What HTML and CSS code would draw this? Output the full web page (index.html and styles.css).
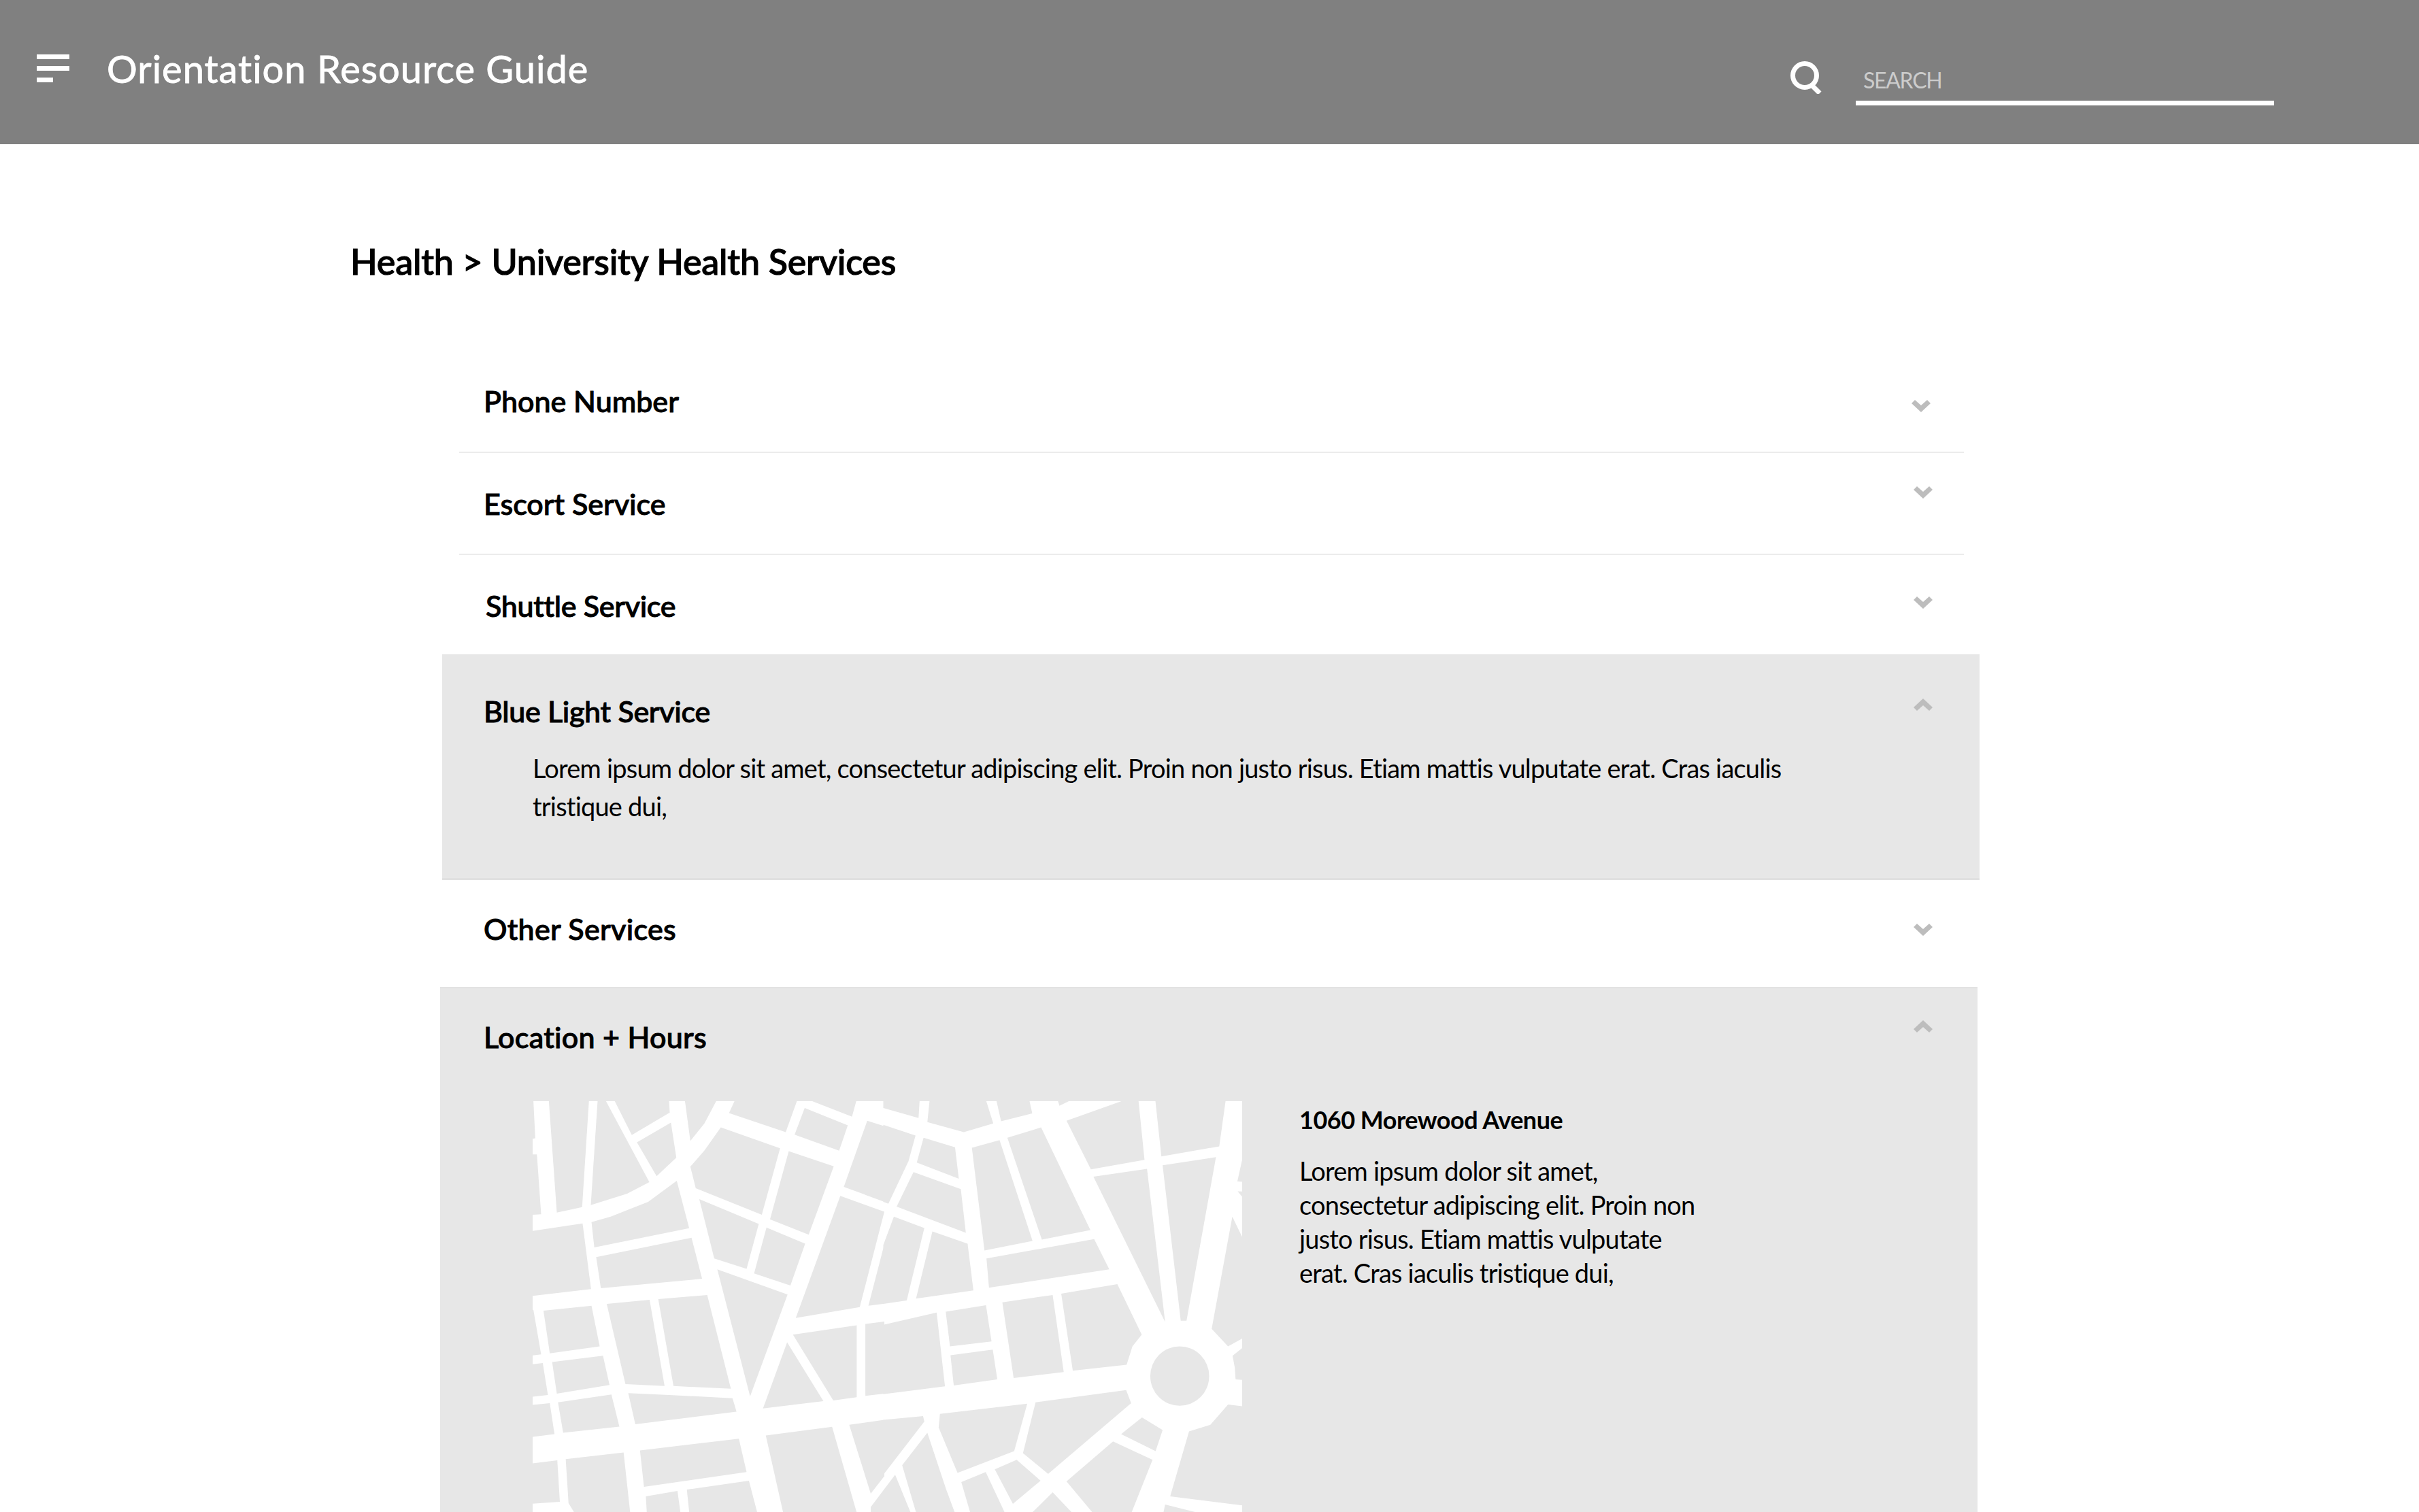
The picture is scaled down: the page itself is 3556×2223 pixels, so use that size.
FILE: index.html
```html
<!DOCTYPE html>
<html lang="en">
<head>
    <meta charset="UTF-8">
    <meta name="viewport" content="width=device-width, initial-scale=1.0">
    <title>Orientation Resource Guide</title>
    <link rel="stylesheet" href="styles.css">
</head>
<body>
    <header class="topbar">
        <div class="menu-icon"><span></span><span></span><span class="short"></span></div>
        <h1 class="site-title">Orientation Resource Guide</h1>
        <div class="search">
            <svg class="search-icon" viewBox="0 0 48 48"><circle cx="21" cy="21" r="17.5"/><line x1="32" y1="36" x2="43" y2="47"/></svg>
            <input class="search-input" type="text" placeholder="SEARCH">
        </div>
    </header>

    <main class="page">
        <h2 class="crumb">Health &gt; University Health Services</h2>

        <div class="accordion">
            <section class="row row-phone">
                <h3>Phone Number</h3>
                <svg class="chev chev-phone" viewBox="0 0 28 20"><polygon points="0,6 5,1 14,9 23,1 28,6 14,19"/></svg>
            </section>
            <section class="row row-escort">
                <h3>Escort Service</h3>
                <svg class="chev chev-escort" viewBox="0 0 28 20"><polygon points="0,6 5,1 14,9 23,1 28,6 14,19"/></svg>
            </section>
            <section class="row row-shuttle">
                <h3>Shuttle Service</h3>
                <svg class="chev chev-shuttle" viewBox="0 0 28 20"><polygon points="0,6 5,1 14,9 23,1 28,6 14,19"/></svg>
            </section>

            <section class="row open open-blue">
                <h3>Blue Light Service</h3>
                <svg class="chev chev-blue" viewBox="0 0 28 20"><polygon points="0,14 5,19 14,11 23,19 28,14 14,1"/></svg>
                <p class="row-text">Lorem ipsum dolor sit amet, consectetur adipiscing elit. Proin non justo risus. Etiam mattis vulputate erat. Cras iaculis<br>tristique dui,</p>
            </section>

            <section class="row row-other">
                <h3>Other Services</h3>
                <svg class="chev chev-other" viewBox="0 0 28 20"><polygon points="0,6 5,1 14,9 23,1 28,6 14,19"/></svg>
            </section>

            <section class="row open open-location">
                <h3>Location + Hours</h3>
                <svg class="chev chev-location" viewBox="0 0 28 20"><polygon points="0,14 5,19 14,11 23,19 28,14 14,1"/></svg>
                <div class="location">
                    <svg class="map" viewBox="783 1617 1043 606">
                        <rect class="road" x="783" y="1617" width="1043" height="606"/>
                        <g class="blocks" transform="translate(760 1600) scale(0.34439 0.39732)">
                            <polygon points="50,30 70,42 78,180 66,182 66,240 85,240 103,461 66,463 50,463"/>
                            <polygon points="135,30 308,30 278,435 170,455"/>
                            <polygon points="345,30 372,30 565,342 470,385 315,427"/>
                            <polygon points="410,30 648,30 652,85 490,168"/>
                            <polygon points="512,195 657,122 680,252 596,320"/>
                            <polygon points="715,30 858,30 800,125 740,190"/>
                            <polygon points="935,30 1200,30 1147,157 905,87"/>
                            <polygon points="1258,30 1452,30 1430,100 1258,42"/>
                            <polygon points="1228,68 1412,132 1375,226 1185,167"/>
                            <polygon points="870,140 1123,217 1045,463 763,365 740,285 800,225"/>
                            <polygon points="1160,228 1352,284 1245,537 1080,480"/>
                            <polygon points="1495,115 1568,135 1568,415 1395,360"/>
                            <polygon points="778,405 1032,497 980,663 842,625"/>
                            <polygon points="1065,510 1230,570 1167,725 1012,680"/>
                            <polygon points="1380,393 1568,452 1463,805 1190,845"/>
                            <polygon points="1568,572 1500,800 1568,792"/>
                            <polygon points="318,490 400,470 560,415 682,337 735,513 330,584"/>
                            <polygon points="338,620 745,548 790,700 358,735"/>
                            <polygon points="50,525 280,495 316,738 50,765"/>
                            <polygon points="113,818 318,800 353,950 140,976"/>
                            <polygon points="383,793 566,778 630,1097 463,1090"/>
                            <polygon points="603,775 812,760 913,1107 668,1097"/>
                            <polygon points="855,665 1155,758 995,1135"/>
                            <polygon points="150,1008 367,985 395,1093 170,1125"/>
                            <polygon points="175,1157 403,1128 437,1247 197,1270"/>
                            <polygon points="475,1123 650,1130 920,1142 937,1192 505,1238"/>
                            <polygon points="50,815 70,815 103,980 50,985"/>
                            <polygon points="50,1018 110,1012 132,1130 50,1138"/>
                            <polygon points="50,1168 140,1160 160,1275 50,1287"/>
                            <polygon points="50,1385 172,1372 183,1525 50,1533"/>
                            <polygon points="208,1367 455,1343 485,1580 255,1580 220,1530"/>
                            <polygon points="525,1335 947,1292 980,1415 542,1470"/>
                            <polygon points="550,1505 685,1485 700,1580 555,1580"/>
                            <polygon points="725,1480 990,1447 1030,1580 737,1580"/>
                            <polygon points="1062,1280 1345,1248 1455,1580 1140,1580"/>
                            <polygon points="1050,1180 1153,935 1308,1153"/>
                            <polygon points="1178,907 1450,872 1450,1138 1350,1150"/>
                            <polygon points="1487,867 1568,858 1568,1125 1487,1133"/>
                            <polygon points="1418,1240 1568,1222 1568,1430 1510,1495"/>
                        </g>
                        <g class="blocks" transform="translate(1280 1600) scale(0.3699 0.39732)">
                            <polygon points="50,30 195,30 190,105 50,68"/>
                            <polygon points="235,30 455,30 487,125 370,157 225,120"/>
                            <polygon points="497,30 628,30 642,88 518,117"/>
                            <polygon points="740,30 815,30 750,60"/>
                            <polygon points="1035,30 1063,30 1088,260 875,295 778,115"/>
                            <polygon points="1130,30 1412,30 1385,210 1155,247"/>
                            <polygon points="50,130 178,170 150,265 70,422 50,415"/>
                            <polygon points="210,178 335,213 350,330 183,270"/>
                            <polygon points="170,305 358,368 378,530 103,433"/>
                            <polygon points="402,215 512,187 643,560 452,595"/>
                            <polygon points="543,178 677,140 873,520 680,555"/>
                            <polygon points="885,322 1098,293 1170,860"/>
                            <polygon points="1160,280 1372,250 1255,855 1232,855"/>
                            <polygon points="50,575 92,470 213,512 143,780 50,793"/>
                            <polygon points="245,525 385,570 408,743 180,773"/>
                            <polygon points="460,625 888,553 948,665 470,733"/>
                            <polygon points="50,870 262,825 295,1098 50,1127"/>
                            <polygon points="298,822 458,798 480,932 315,950"/>
                            <polygon points="317,983 485,962 503,1072 330,1095"/>
                            <polygon points="523,787 723,760 767,1045 568,1067"/>
                            <polygon points="757,755 980,720 1077,907 1040,950 1017,1018 803,1040"/>
                            <ellipse cx="1228" cy="1060" rx="117" ry="110"/>
                            <polygon points="1490,255 1476,260 1457,340 1490,342"/>
                            <polygon points="1490,378 1458,376 1490,412"/>
                            <polygon points="1437,470 1476,545 1490,545 1490,920 1478,920 1420,950 1355,885"/>
                            <polygon points="1438,985 1478,955 1490,955 1490,1075 1450,1072 1447,1030"/>
                            <polygon points="1420,1165 1478,1172 1490,1172 1490,1540 1190,1505 1265,1265 1350,1240"/>
                            <polygon points="1170,1535 1310,1568 1160,1580"/>
                            <polygon points="1015,1112 1035,1160 705,1422 605,1345 655,1157"/>
                            <polygon points="275,1200 622,1162 570,1338 345,1418 270,1250"/>
                            <polygon points="50,1222 208,1208 213,1228 50,1425"/>
                            <polygon points="225,1270 300,1480 340,1580 185,1580 125,1390"/>
                            <polygon points="97,1425 165,1580 0,1580 0,1545"/>
                            <polygon points="360,1452 457,1415 540,1580 400,1580"/>
                            <polygon points="493,1405 580,1370 675,1447 565,1533"/>
                            <polygon points="625,1580 723,1490 815,1580"/>
                            <polygon points="995,1275 1078,1213 1160,1260 1132,1338"/>
                            <polygon points="778,1450 963,1302 1120,1370 1030,1580 895,1580"/>
                        </g>
                    </svg>
                    <div class="address">
                        <h4>1060 Morewood Avenue</h4>
                        <p>Lorem ipsum dolor sit amet,<br>consectetur adipiscing elit. Proin non<br>justo risus. Etiam mattis vulputate<br>erat. Cras iaculis tristique dui,</p>
                    </div>
                </div>
            </section>
        </div>
    </main>
</body>
</html>
```

FILE: styles.css
```css
*{
    padding: 0;
    margin: 0;
    box-sizing: border-box;
}
html, body{
    height: 100%;
    overflow: hidden;
}
body{
    font-family: 'Lato', 'Liberation Sans', sans-serif;
    font-variant-ligatures: none;
    background: white;
    color: black;
}

/* top bar */
.topbar{
    height: 212px;
    background: #808080;
    display: flex;
    align-items: flex-start;
    padding: 0 213px 0 54px;
}
.menu-icon{
    width: 48px;
    margin-top: 80px;
    display: flex;
    flex-direction: column;
    gap: 10px;
}
.menu-icon span{
    display: block;
    height: 7px;
    background: white;
}
.menu-icon .short{
    width: 24px;
}
.site-title{
    margin: 66px 0 0 55px;
    font-size: 56px;
    line-height: 70px;
    font-weight: 400;
    letter-spacing: 1px;
    color: white;
    -webkit-text-stroke: 0.8px white;
}
.search{
    margin-left: auto;
    display: flex;
    align-items: flex-start;
}
.search-icon{
    width: 48px;
    height: 48px;
    margin-top: 90px;
    fill: none;
    stroke: white;
    stroke-width: 7;
}
.search-input{
    width: 615px;
    height: 57px;
    margin: 98px 0 0 48px;
    padding: 0 0 12px 11px;
    border: 0;
    border-bottom: 7px solid white;
    background: transparent;
    font-family: inherit;
    font-size: 32px;
    letter-spacing: -1.3px;
    color: #ccc;
}
.search-input::placeholder{
    color: #ccc;
    opacity: 1;
}

/* main column */
.page{
    padding: 0 0 0 515px;
}
.crumb{
    font-size: 52px;
    line-height: 64px;
    font-weight: 500;
    letter-spacing: -0.2px;
    padding-top: 140px;
    height: 308px;
    -webkit-text-stroke: 1.2px black;
}
.accordion{
    width: 2212px;
    margin-left: 160px;
}

.row{
    position: relative;
    padding-left: 36px;
    border-bottom: 2px solid #ececec;
}
.row h3{
    font-size: 43px;
    line-height: 60px;
    font-weight: 500;
    -webkit-text-stroke: 1px black;
}
.row-phone{
    padding-top: 40px;
    height: 146px;
}
.row-escort{
    padding-top: 45px;
    height: 150px;
}
.row-shuttle{
    padding-top: 45px;
    height: 146px;
    border-bottom: 0;
}
.row-shuttle h3{
    margin-left: 3px;
    letter-spacing: -0.3px;
}
.row-other{
    padding-top: 42px;
    height: 157px;
    border-bottom: 0;
}
.row-other h3, .open-location h3{
    letter-spacing: 0.3px;
}

.open{
    background: #e7e7e7;
    margin-left: -25px;
    margin-right: -23px;
    padding-left: 61px;
    border-bottom: 0;
}
.open-blue{
    height: 332px;
    padding-top: 54px;
    border-bottom: 3px solid #e0e0e0;
}
.open-blue h3{
    letter-spacing: -0.3px;
}
.open-location{
    height: 774px;
    padding-top: 42px;
    margin-left: -28px;
    margin-right: -20px;
    padding-left: 64px;
    border-top: 2px solid #e2e2e2;
}
.row-text{
    margin: 25px 0 0 72px;
    font-size: 38px;
    line-height: 56px;
    letter-spacing: -0.8px;
}

/* chevrons sit over the row, the mockup has them a bit uneven */
.chev{
    position: absolute;
    width: 28px;
    height: 20px;
    fill: #bdbdbd;
}
.chev-phone{ top: 67px; left: 2135px; }
.chev-escort{ top: 48px; left: 2138px; }
.chev-shuttle{ top: 60px; left: 2138px; }
.chev-blue{ top: 64px; left: 2163px; }
.chev-other{ top: 63px; left: 2138px; }
.chev-location{ top: 46px; left: 2166px; }

.location{
    margin: 64px 0 0 72px;
    display: flex;
    align-items: flex-start;
}
.map{
    display: block;
    width: 1043px;
    height: 606px;
    flex-shrink: 0;
}
.blocks{
    fill: #e7e7e7;
}
.road{
    fill: white;
}
.address{
    margin-left: 84px;
    padding-top: 7px;
}
.address h4{
    font-size: 36px;
    line-height: 40px;
    font-weight: 700;
    letter-spacing: -0.5px;
    margin-bottom: 30px;
}
.address p{
    font-size: 38px;
    line-height: 50px;
    letter-spacing: -0.8px;
}
```
